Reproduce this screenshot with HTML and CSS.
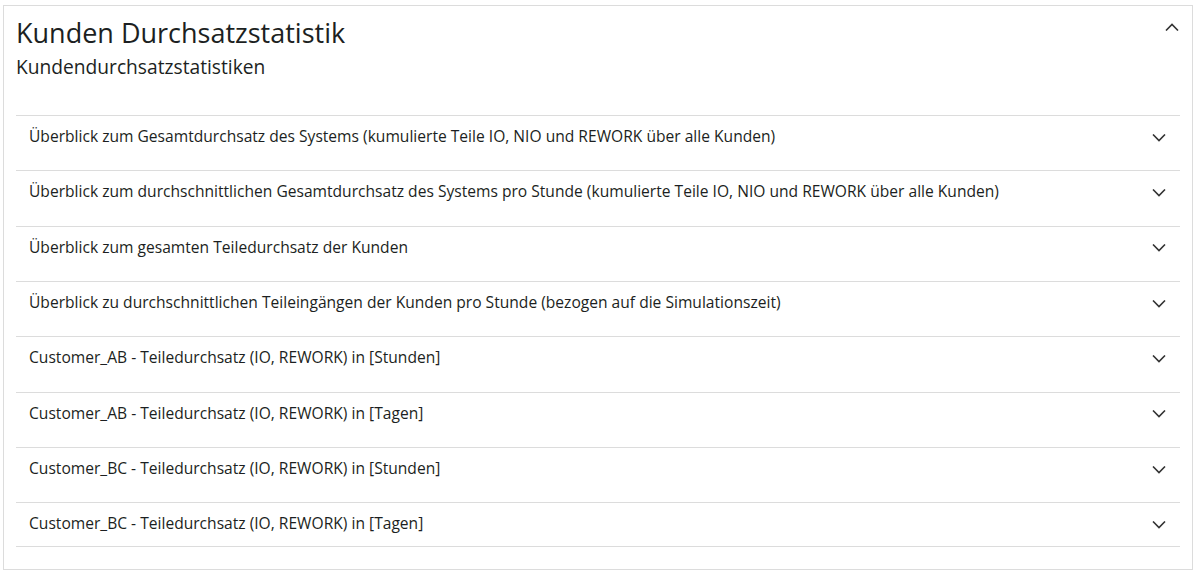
FILE: index.html
```html
<!DOCTYPE html>
<html lang="de">
<head>
<meta charset="utf-8">
<title>Kunden Durchsatzstatistik</title>
<link rel="stylesheet" href="styles.css">
</head>
<body>
<section class="card">
  <header class="card-head">
    <div class="titles">
      <h1 class="title">Kunden Durchsatzstatistik</h1>
      <h2 class="subtitle">Kundendurchsatzstatistiken</h2>
    </div>
    <svg class="chev-up" width="14" height="8" viewBox="0 0 14 8"><path d="M1 7.5 L7 1.5 L13 7.5" fill="none" stroke="#333" stroke-width="1.6"/></svg>
  </header>
  <div class="list">
    <div class="item"><span class="label">Überblick zum Gesamtdurchsatz des Systems (kumulierte Teile IO, NIO und REWORK über alle Kunden)</span><svg class="chev" width="14" height="8" viewBox="0 0 14 8"><path d="M1 0.5 L7 6.5 L13 0.5" fill="none" stroke="#333" stroke-width="1.6"/></svg></div>
    <div class="item"><span class="label">Überblick zum durchschnittlichen Gesamtdurchsatz des Systems pro Stunde (kumulierte Teile IO, NIO und REWORK über alle Kunden)</span><svg class="chev" width="14" height="8" viewBox="0 0 14 8"><path d="M1 0.5 L7 6.5 L13 0.5" fill="none" stroke="#333" stroke-width="1.6"/></svg></div>
    <div class="item"><span class="label">Überblick zum gesamten Teiledurchsatz der Kunden</span><svg class="chev" width="14" height="8" viewBox="0 0 14 8"><path d="M1 0.5 L7 6.5 L13 0.5" fill="none" stroke="#333" stroke-width="1.6"/></svg></div>
    <div class="item"><span class="label">Überblick zu durchschnittlichen Teileingängen der Kunden pro Stunde (bezogen auf die Simulationszeit)</span><svg class="chev" width="14" height="8" viewBox="0 0 14 8"><path d="M1 0.5 L7 6.5 L13 0.5" fill="none" stroke="#333" stroke-width="1.6"/></svg></div>
    <div class="item"><span class="label">Customer_AB - Teiledurchsatz (IO, REWORK) in [Stunden]</span><svg class="chev" width="14" height="8" viewBox="0 0 14 8"><path d="M1 0.5 L7 6.5 L13 0.5" fill="none" stroke="#333" stroke-width="1.6"/></svg></div>
    <div class="item"><span class="label">Customer_AB - Teiledurchsatz (IO, REWORK) in [Tagen]</span><svg class="chev" width="14" height="8" viewBox="0 0 14 8"><path d="M1 0.5 L7 6.5 L13 0.5" fill="none" stroke="#333" stroke-width="1.6"/></svg></div>
    <div class="item"><span class="label">Customer_BC - Teiledurchsatz (IO, REWORK) in [Stunden]</span><svg class="chev" width="14" height="8" viewBox="0 0 14 8"><path d="M1 0.5 L7 6.5 L13 0.5" fill="none" stroke="#333" stroke-width="1.6"/></svg></div>
    <div class="item last"><span class="label">Customer_BC - Teiledurchsatz (IO, REWORK) in [Tagen]</span><svg class="chev" width="14" height="8" viewBox="0 0 14 8"><path d="M1 0.5 L7 6.5 L13 0.5" fill="none" stroke="#333" stroke-width="1.6"/></svg></div>
  </div>
</section>
</body>
</html>
```
FILE: styles.css
```css
* { box-sizing: border-box; }
html, body { margin: 0; padding: 0; background: #fff; }
body {
  font-family: "Open Sans", "Noto Sans", sans-serif;
  color: #1c1f22;
}
.card {
  margin: 5px 5px 0 3px;
  height: 565px;
  border: 1px solid #dcdcdc;
  padding: 0 12px;
}
.card-head {
  display: flex;
  justify-content: space-between;
  align-items: flex-start;
  height: 109px;
}
.title {
  margin: 0;
  padding-top: 9px;
  font-size: 27px;
  font-weight: 500;
  line-height: 36px;
}
.subtitle {
  margin: 3px 0 0;
  font-size: 19.2px;
  font-weight: 500;
  line-height: 26px;
}
.chev-up { margin-top: 17px; margin-right: 1px; }
.list { display: flex; flex-direction: column; }
.item {
  display: flex;
  align-items: center;
  justify-content: space-between;
  height: 44px;
  border-top: 1px solid #dcdcdc;
  padding: 0 14px 0 13px;
  margin-bottom: 11.35px;
}
.item.last { margin-bottom: 0; border-bottom: 1px solid #dcdcdc; height: 45px; }
.label { font-size: 15.6px; font-weight: 500; margin-bottom: 3px; }
.chev { flex: none; }
```
